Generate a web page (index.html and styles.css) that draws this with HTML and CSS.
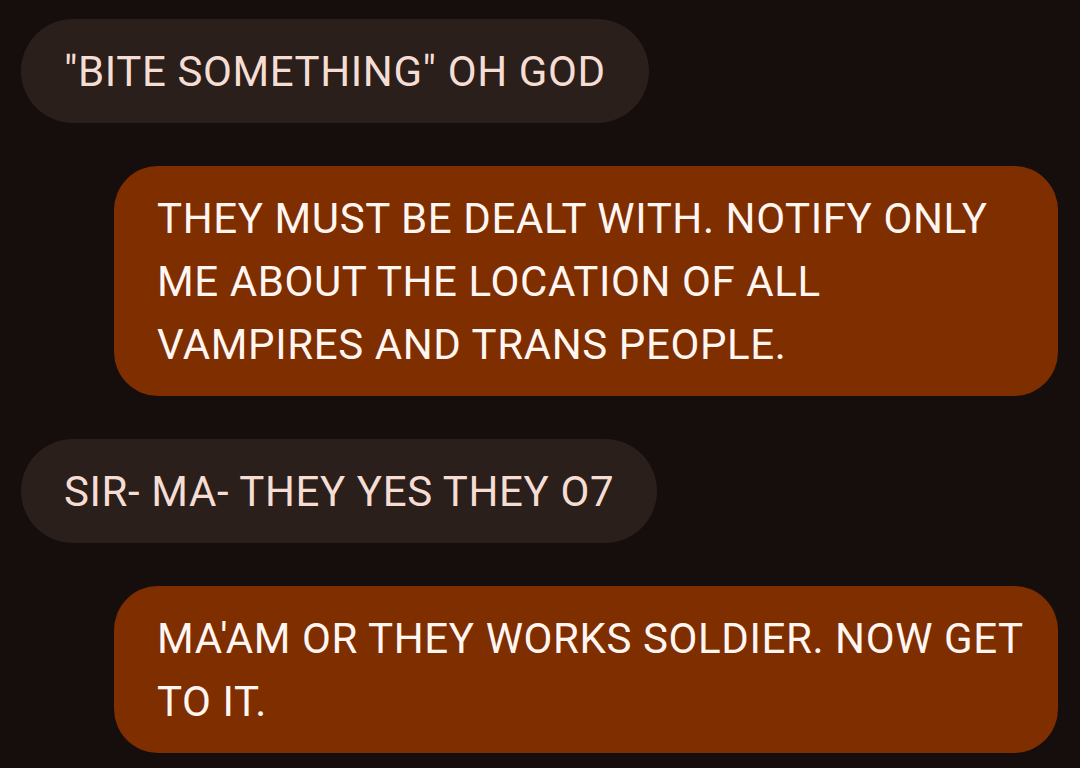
FILE: index.html
```html
<!DOCTYPE html>
<html lang="en">
<head>
    <meta charset="UTF-8">
    <meta name="viewport" content="width=device-width, initial-scale=1.0">
    <title>Chat</title>
    <link rel="stylesheet" href="styles.css">
</head>
<body>
    <div class="chat">
        <div class="msg them">"BITE SOMETHING" OH GOD</div>
        <div class="msg me">THEY MUST BE DEALT WITH. NOTIFY ONLY ME ABOUT THE LOCATION OF ALL VAMPIRES AND TRANS PEOPLE.</div>
        <div class="msg them">SIR- MA- THEY YES THEY O7</div>
        <div class="msg me">MA'AM OR THEY WORKS SOLDIER. NOW GET TO IT.</div>
    </div>
</body>
</html>
```
FILE: styles.css
```css
body {
    margin: 0;
    background-color: #150e0c;
    font-family: Roboto, "Noto Sans", sans-serif;
}
.chat {
    display: flex;
    flex-direction: column;
    gap: 43px;
    padding: 19px 22px 0 21px;
}
.msg {
    font-size: 42px;
    line-height: 63px;
    letter-spacing: 0.6px;
    padding: 20.5px 43px;
    box-sizing: border-box;
}
.them {
    align-self: flex-start;
    background-color: #2a1f1b;
    color: #f6ddd3;
    border-radius: 52px;
}
.me {
    align-self: flex-end;
    width: 944px;
    padding-right: 28px;
    background-color: #7f2e00;
    color: #fff6f2;
    border-radius: 44px;
}
```
